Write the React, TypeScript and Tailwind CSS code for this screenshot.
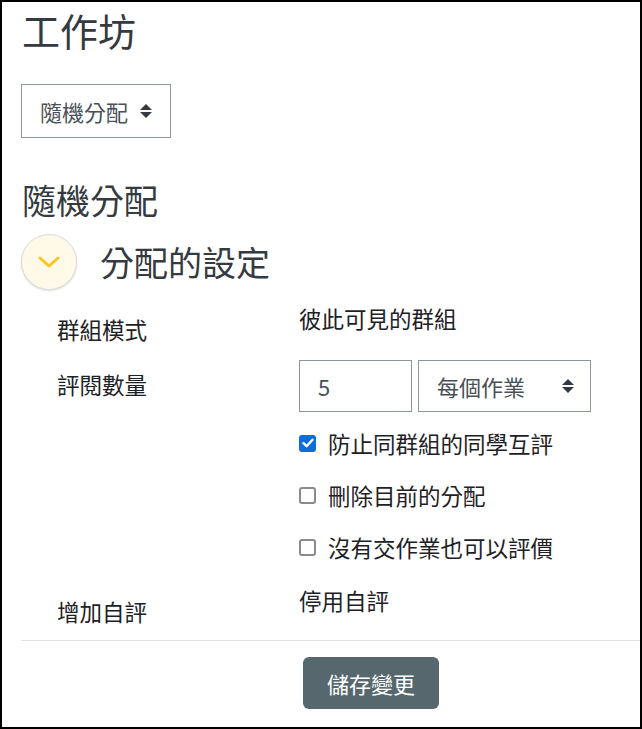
import React from "react";

function SortArrows() {
  return (
    <svg width="12" height="14" viewBox="0 0 12 14" className="shrink-0">
      <path d="M6 0 L12 6 H0 Z" fill="#343a40" />
      <path d="M0 8 H12 L6 14 Z" fill="#343a40" />
    </svg>
  );
}

function Check({ checked }: { checked?: boolean }) {
  if (checked) {
    return (
      <div className="w-[17px] h-[17px] rounded-[3px] bg-[#0f6cdb] flex items-center justify-center shrink-0">
        <svg width="12" height="10" viewBox="0 0 12 10">
          <path d="M1.5 5.2 L4.6 8.2 L10.5 1.8" stroke="white" strokeWidth="2.4" fill="none" strokeLinecap="round" strokeLinejoin="round" />
        </svg>
      </div>
    );
  }
  return <div className="w-[17px] h-[17px] rounded-[3px] border-2 border-[#8a8a8a] bg-white shrink-0" />;
}

export default function App() {
  return (
    <div
      className="w-[642px] h-[729px] border-2 border-black bg-white overflow-hidden text-[#1d2125]"
      style={{ fontFamily: '"Noto Sans CJK TC", "Noto Sans", sans-serif' }}
    >
      <div className="ml-[20px] h-[56px] flex items-center text-[38px] text-[#343a40] leading-none">工作坊</div>

      <div className="ml-[19px] mt-[26px] w-[150px] h-[54px] border border-[#8f959e] flex items-center pl-[18px] gap-[12px] text-[22px] text-[#495057]">
        <span className="leading-none">隨機分配</span>
        <SortArrows />
      </div>

      <div className="ml-[20px] mt-[40px] h-[44px] flex items-center text-[34px] text-[#343a40] leading-none">隨機分配</div>

      <div className="ml-[19px] mt-[12px] h-[56px] flex items-center gap-[23px]">
        <div className="w-[56px] h-[56px] rounded-full bg-[#fffae8] border border-[#dcdcdc] shadow-[0_1px_2px_rgba(0,0,0,0.15)] flex items-center justify-center">
          <svg width="22" height="12" viewBox="0 0 22 12">
            <path d="M2 2 L11 10 L20 2" stroke="#f9c51f" strokeWidth="3" fill="none" strokeLinecap="round" strokeLinejoin="round" />
          </svg>
        </div>
        <span className="text-[34px] leading-none text-[#343a40]">分配的設定</span>
      </div>

      <div className="mt-[10px] flex">
        <div className="ml-[55px] w-[242px] pt-[11px] h-[47px] flex items-center text-[22.5px] leading-none">群組模式</div>
        <div className="h-[36px] flex items-center text-[22.5px] leading-none">彼此可見的群組</div>
      </div>

      <div className="mt-[13px] flex">
        <div className="ml-[55px] w-[242px] pt-[6px] h-[42px] flex items-center text-[22.5px] leading-none">評閱數量</div>
        <div className="flex gap-[6px]">
          <div className="w-[113px] h-[52px] border border-[#8f959e] flex items-center pl-[18px] text-[22px] text-[#495057] leading-none">5</div>
          <div className="w-[173px] h-[52px] border border-[#8f959e] flex items-center pl-[18px] text-[22px] text-[#495057] leading-none">
            <span className="w-[125px]">每個作業</span>
            <SortArrows />
          </div>
        </div>
      </div>

      <div className="ml-[297px] mt-[5px] flex flex-col">
        <div className="h-[52px] flex items-center gap-[12px]">
          <Check checked />
          <span className="text-[22.5px] leading-none">防止同群組的同學互評</span>
        </div>
        <div className="h-[52px] flex items-center gap-[12px]">
          <Check />
          <span className="text-[22.5px] leading-none">刪除目前的分配</span>
        </div>
        <div className="h-[53px] flex items-center gap-[12px]">
          <Check />
          <span className="text-[22.5px] leading-none">沒有交作業也可以評價</span>
        </div>
      </div>

      <div className="mt-[8px] flex">
        <div className="ml-[55px] w-[242px] pt-[11px] h-[47px] flex items-center text-[22.5px] leading-none">增加自評</div>
        <div className="h-[36px] flex items-center text-[22.5px] leading-none">停用自評</div>
      </div>

      <div className="ml-[19px] mt-[11px] h-px bg-[#dee2e6]" />

      <div className="mt-[16px] ml-[301px]">
        <div className="w-[136px] h-[52px] rounded-[6px] bg-[#56686e] flex items-center justify-center text-white text-[22px] leading-none">
          儲存變更
        </div>
      </div>
    </div>
  );
}
